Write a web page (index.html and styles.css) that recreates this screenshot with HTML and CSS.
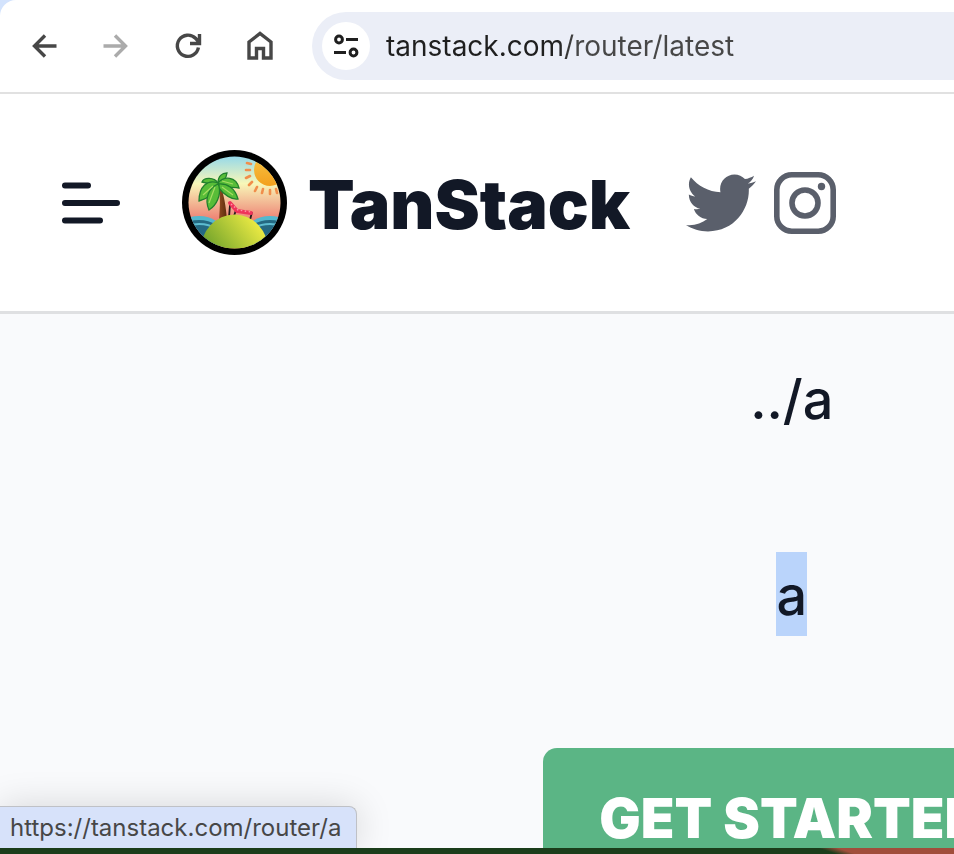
FILE: index.html
```html
<!DOCTYPE html>
<html lang="en">
<head>
  <meta charset="UTF-8">
  <title>TanStack Router</title>
  <link rel="stylesheet" href="styles.css">
</head>
<body>
  <div class="window">
    <div class="toolbar">
      <div class="toolbar-buttons">
        <button type="button" class="tool" aria-label="Back">
          <svg viewBox="0 0 32 32"><path d="M28.500 16H7M17 5.500L6.500 16 17 26.500"/></svg>
        </button>
        <button type="button" class="tool" aria-label="Forward" disabled>
          <svg viewBox="0 0 32 32"><path d="M3.500 16H25M15 5.500L25.500 16 15 26.500"/></svg>
        </button>
        <button type="button" class="tool" aria-label="Reload">
          <svg viewBox="0 0 32 32"><path d="M26.4 17.5A10.6 10.6 0 1 1 23.5 8.3L27 12M18 13.500H27.500V4"/></svg>
        </button>
        <button type="button" class="tool" aria-label="Home">
          <svg viewBox="0 0 32 32"><path d="M5 28V12L16 3.500l11 8.500v16h-7.500v-9.500h-7V28z"/></svg>
        </button>
      </div>
      <div class="address">
        <button type="button" class="site-info" aria-label="Site information">
          <svg viewBox="0 0 28 28"><circle cx="7" cy="7.500" r="3.400"/><path d="M14 7.500h12M2 20.500h12"/><circle cx="21.500" cy="20.500" r="3.400"/></svg>
        </button>
        <input class="url" type="text" aria-label="Address" value="tanstack.com/router/latest">
      </div>
    </div>

    <header class="navbar">
      <button type="button" class="menu" aria-label="Menu">
        <svg viewBox="0 0 60 42"><path d="M5 3.500h23M5 21h52M5 38.500h35"/></svg>
      </button>
      <a class="brand" href="#">
        <svg class="logo" viewBox="0 0 105 105">
          <defs>
            <linearGradient id="sky" x1="0" y1="0" x2="0" y2="1">
              <stop offset="0" stop-color="#7fd2f5"/>
              <stop offset=".32" stop-color="#f8f7b8"/>
              <stop offset=".66" stop-color="#ee8275"/>
            </linearGradient>
            <linearGradient id="hill" x1=".8" y1="0" x2=".2" y2=".5">
              <stop offset="0" stop-color="#f2ee45"/>
              <stop offset="1" stop-color="#76a62c"/>
            </linearGradient>
            <linearGradient id="sun" x1="0" y1="0" x2="0" y2="1">
              <stop offset="0" stop-color="#f6c544"/>
              <stop offset="1" stop-color="#f3a01e"/>
            </linearGradient>
            <linearGradient id="trunk" x1="0" y1="0" x2="1" y2="0">
              <stop offset="0" stop-color="#9b5226"/>
              <stop offset="1" stop-color="#5b2c0c"/>
            </linearGradient>
            <clipPath id="disc"><circle cx="52.500" cy="52.500" r="46"/></clipPath>
          </defs>
          <circle cx="52.500" cy="52.500" r="52.500" fill="#000"/>
          <g clip-path="url(#disc)">
            <rect width="105" height="105" fill="url(#sky)"/>
            <circle cx="88" cy="20" r="16" fill="url(#sun)"/>
            <g stroke="#f18e4b" stroke-width="2.600" stroke-linecap="round">
              <path d="M65 13l4 1M64 20h4M64 28l4-2M67 35l3-3M73 41l2-4M80 43l1-4M88 44v-4M95 43l-1-4"/>
            </g>
            <g fill="#54b8ce"><ellipse cx="17" cy="83" rx="24" ry="17"/><ellipse cx="88" cy="83" rx="24" ry="17"/></g>
            <g fill="#246982"><ellipse cx="17" cy="87" rx="24" ry="17"/><ellipse cx="88" cy="87" rx="24" ry="17"/></g>
            <g fill="none" stroke="#5dbcd0" stroke-width="2"><ellipse cx="17" cy="91" rx="25" ry="17"/><ellipse cx="88" cy="91" rx="25" ry="17"/></g>
            <path d="M35 32c4 12 3 25 2 38h8C44 57 42 43 37 32z" fill="url(#trunk)"/>
            <g fill="#58bd38" stroke="#21802d" stroke-width="1.300">
              <path d="M36 33c-4-6-14-6-16-1 5 1 10 3 15 3z"/>
              <path d="M36 33c0-7 4-10 9-10-1 6-3 9-8 12z"/>
              <path d="M36 33c6-7 18-7 21 5-7-1-14 0-20-3z"/>
              <path d="M36 34c9-1 17 4 20 15-6 1-14-4-20-12z"/>
              <path d="M36 33c-11-4-19 4-19 18 9-2 16-9 20-16z"/>
              <path d="M36 34c-9 4-14 14-9 26 8-5 12-15 10-24z"/>
            </g>
            <path d="M33 37l-6 16M31 36l-10 9M40 31l11 3M40 37l11 8" fill="none" stroke="#a6dc62" stroke-width="1.200"/>
            <path d="M48 55l-1 12M54 60l-3 9M70 62l-2 8" stroke="#251b1d" stroke-width="1.800"/>
            <path d="M48 53l7 8 14 2" fill="none" stroke="#ef345a" stroke-width="4" stroke-linejoin="round" stroke-linecap="round"/>
            <path d="M49 54l7 6 13 2" fill="none" stroke="#ff94a7" stroke-width="1.400" stroke-dasharray="1.500 2.500"/>
            <ellipse cx="52.500" cy="101" rx="34" ry="36.500" fill="url(#hill)"/>
          </g>
        </svg>
        <span class="brand-name">TanStack</span>
      </a>
      <nav class="social">
        <a href="#" aria-label="Twitter">
          <svg viewBox="0 0 512 512"><path fill="currentColor" d="M459.370 151.716c.325 4.548.325 9.097.325 13.645 0 138.720-105.583 298.558-298.558 298.558-59.452 0-114.680-17.219-161.137-47.106 8.447.974 16.568 1.299 25.340 1.299 49.055 0 94.213-16.568 130.274-44.832-46.132-.975-84.792-31.188-98.112-72.772 6.498.974 12.995 1.624 19.818 1.624 9.421 0 18.843-1.300 27.614-3.573-48.081-9.747-84.143-51.980-84.143-102.985v-1.299c13.969 7.797 30.214 12.670 47.431 13.319-28.264-18.843-46.781-51.005-46.781-87.391 0-19.492 5.197-37.360 14.294-52.954 51.655 63.675 129.300 105.258 216.365 109.807-1.624-7.797-2.599-15.918-2.599-24.040 0-57.828 46.782-104.934 104.934-104.934 30.213 0 57.502 12.670 76.670 33.137 23.715-4.548 46.456-13.320 66.599-25.340-7.798 24.366-24.366 44.833-46.132 57.827 21.117-2.273 41.584-8.122 60.426-16.243-14.292 20.791-32.161 39.308-52.628 54.253z"/></svg>
        </a>
        <a href="#" aria-label="Instagram">
          <svg class="narrow" viewBox="0 0 62 70"><rect x="2.800" y="6.800" width="56.400" height="56.400" rx="15" fill="none" stroke="currentColor" stroke-width="5.600"/><circle cx="31" cy="35" r="13" fill="none" stroke="currentColor" stroke-width="5.600"/><circle cx="47.500" cy="18.500" r="3.700" fill="currentColor"/></svg>
        </a>
      </nav>
    </header>

    <main class="page">
      <div class="content">
        <a class="route" href="../a"><span>../a</span></a>
        <a class="route" href="a"><span class="selected">a</span></a>
        <a class="cta" href="#">Get Started</a>
      </div>
    </main>

    <div class="status">https://tanstack.com/router/a</div>
  </div>
</body>
</html>
```

FILE: styles.css
```css
* {
  box-sizing: border-box;
}

:root {
  --ink: #121826;
  --tool: #474747;
  --green: #5bb585;
}

body {
  margin: 0;
  height: 100vh;
  padding-bottom: 6px;
  overflow: hidden;
  font-family: Inter, "Liberation Sans", sans-serif;
  color: var(--ink);
  background: linear-gradient(18deg, #1b3d1b 86%, #a14e3b 88%) bottom / 100% 6px no-repeat;
}

button {
  border: 0;
  padding: 0;
  background: none;
}

a {
  color: inherit;
  text-decoration: none;
}

svg {
  display: block;
}

.window {
  position: relative;
  display: flex;
  flex-direction: column;
  height: 100%;
  overflow: hidden;
  background: #d3e3fd;
}

/* browser toolbar */
.toolbar {
  display: flex;
  align-items: center;
  gap: 36px;
  height: 94px;
  padding-left: 28px;
  background: #fff;
  border-bottom: 2px solid #e1e1e1;
  border-top-left-radius: 16px;
}

.toolbar-buttons {
  display: flex;
  gap: 40px;
}

.tool svg {
  width: 32px;
  height: 32px;
  fill: none;
  stroke: var(--tool);
  stroke-width: 3.4;
}

.tool:disabled svg {
  stroke: #ababab;
}

.address {
  flex: 1;
  display: flex;
  align-items: center;
  gap: 16px;
  height: 68px;
  padding-left: 10px;
  background: #ebeef7;
  border-radius: 34px 0 0 34px;
}

.site-info {
  padding: 10px;
  border-radius: 50%;
  background: #fff;
}

.site-info svg {
  width: 28px;
  height: 28px;
  fill: none;
  stroke: #1f1f1f;
  stroke-width: 3;
}

.url {
  flex: 1;
  min-width: 0;
  padding: 0;
  border: 0;
  outline: 0;
  font: 28px Inter, sans-serif;
  color: transparent;
  background: linear-gradient(90deg, #1f1f1f 170px, #474747 190px);
  -webkit-background-clip: text;
  background-clip: text;
}

/* site header */
.navbar {
  display: flex;
  align-items: center;
  padding: 56px 60px;
  background: #fff;
  border-bottom: 3px solid #dfe0e2;
}

.menu svg {
  width: 60px;
  height: 42px;
  fill: none;
  stroke: var(--ink);
  stroke-width: 6;
  stroke-linecap: round;
}

.brand {
  display: flex;
  align-items: center;
  gap: 21px;
  margin-left: 62px;
}

.logo {
  width: 105px;
  height: 105px;
}

.brand-name {
  padding-top: 2px;
  font-size: 68px;
  font-weight: 900;
  line-height: 98px;
}

.social {
  display: flex;
  gap: 18px;
  margin-left: 56px;
  color: #5a5f6b;
}

.social svg {
  width: 70px;
  height: 70px;
}

.social .narrow {
  width: 62px;
}

/* page is wider than the window and runs off the right edge */
.page {
  flex: 1;
  min-height: 0;
  overflow: hidden;
  background: #f9fafc;
}

.content {
  display: flex;
  flex-direction: column;
  align-items: center;
  gap: 112px;
  width: 166%;
  padding-top: 42px;
  font-size: 55px;
  line-height: 84px;
}

.route span {
  display: block;
  padding-top: 4px;
  font-weight: 500;
  font-size: 54px;
  line-height: 80px;
}

.selected {
  background: #bad4fb;
}

.cta {
  padding: 28px 56px;
  border-radius: 14px;
  font-weight: 900;
  text-transform: uppercase;
  white-space: nowrap;
  color: #fff;
  background: var(--green);
}

.status {
  position: absolute;
  left: 0;
  bottom: 0;
  padding: 0 15px 0 10px;
  font-size: 24px;
  line-height: 41px;
  color: #474747;
  background: #d7e2fa;
  border: 1px solid #bfc1c6;
  border-width: 1px 1px 0 0;
  border-top-right-radius: 8px;
  box-shadow: 0 0 36px rgba(0, 0, 0, .15);
}
```
